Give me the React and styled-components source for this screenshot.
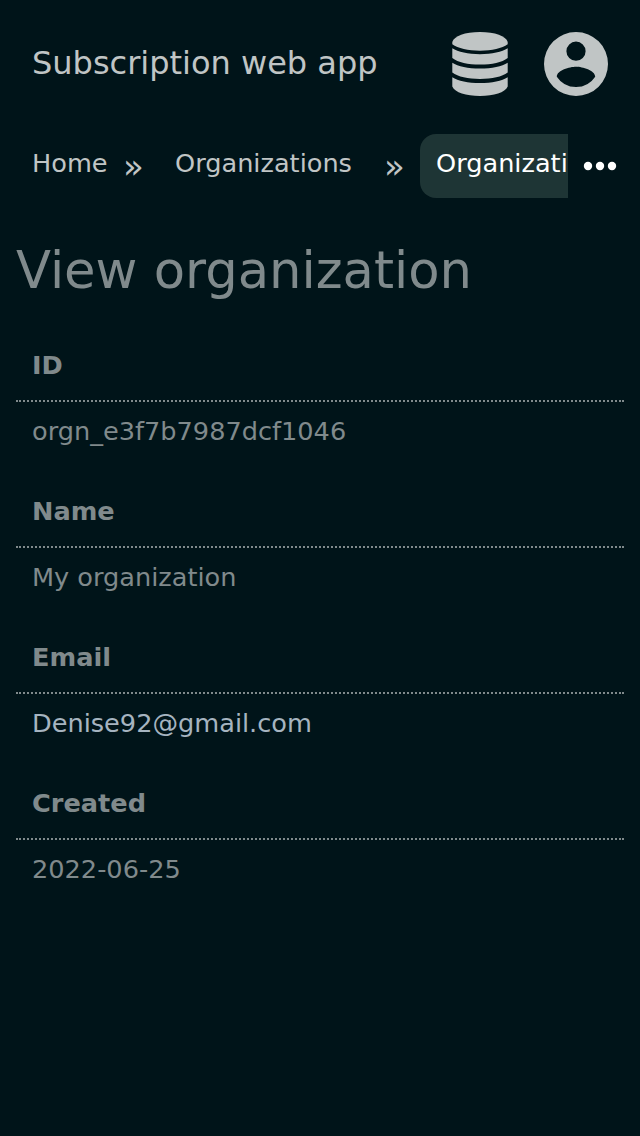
import React from "react";
import styled, { createGlobalStyle } from "styled-components";

const Global = createGlobalStyle`
  * { box-sizing: border-box; }
  body { margin: 0; background: #001419; color: #808a8c; font: 26px/32px "DejaVu Sans", sans-serif; }
  a { color: inherit; text-decoration: none; }
`;
const Page = styled.div`min-height: 1136px; overflow: hidden;`;
const Header = styled.header`
  display: flex; align-items: center; height: 128px; padding: 0 32px; color: #c0c5c5;
`;
const Brand = styled.a`flex: 1; padding-bottom: 2px; font-size: 32px; line-height: 40px;`;
const IconLink = styled.a`
  display: flex; width: 64px; height: 64px; margin-left: 32px;
  svg { width: 64px; height: 64px; fill: currentColor; }
`;
const Nav = styled.nav`display: flex; height: 70px; padding-top: 6px; color: #c0c5c5;`;
const Crumbs = styled.div`display: flex; width: 568px; overflow: hidden; white-space: nowrap;`;
const Crumb = styled.a`
  flex: none; height: 64px; width: ${(p) => p.$width}px; padding: 13px 16px;
  margin-left: ${(p) => p.$gap}px; line-height: 32px; font-size: 25.6px;
  border-radius: 16px; background: ${(p) => (p.$active ? "#1e3535" : "transparent")};
  color: ${(p) => (p.$active ? "#fff" : "inherit")};
`;
const Separator = styled.span`
  flex: none; width: 20px; margin-left: ${(p) => p.$gap}px; padding-top: 12px;
  font-size: 34px; line-height: 40px;
`;
const More = styled.button`
  width: 64px; height: 64px; padding: 0; border: 0; background: none; color: #fff;
  svg { display: block; width: 64px; height: 64px; fill: currentColor; }
`;
const Main = styled.main`padding: 40px 16px 0;`;
const Title = styled.h1`margin: 0; font-weight: 400; font-size: 51.2px; line-height: 64px;`;
const Details = styled.dl`margin: 34px 0 0; font-size: 25.6px;`;
const Term = styled.dt`
  height: 66px; padding: 13px 16px 0; font-weight: 700; border-bottom: 2px dotted #808a8c;
`;
const Value = styled.dd`
  height: 80px; margin: 0; padding: 13px 16px 0; color: ${(p) => (p.$link ? "#a6b4c0" : "inherit")};
`;

const rows = [
  ["ID", "orgn_e3f7b7987dcf1046"],
  ["Name", "My organization"],
  ["Email", "Denise92@gmail.com"],
  ["Created", "2022-06-25"],
];

export default function App() {
  return (
    <Page>
      <Global />
      <Header>
        <Brand href="#">Subscription web app</Brand>
        <IconLink href="#" aria-label="Data">
          <svg viewBox="0 0 64 64">
            <path d="M4.300 10C6 4 17 0 32 0s26 4 27.700 10v2.300C54 16.500 44 18.700 32 18.700S10 16.500 4.300 12.300z" />
            <path d="M4.300 16.300C10 20 20 22.200 32 22.200s22-2.200 27.700-5.900v9.700C54 30.500 44 32.600 32 32.600S10 30.500 4.300 26z" />
            <path d="M4.300 30.800C10 34.500 20 36.600 32 36.600s22-2.100 27.700-5.800v9.800C54 44.900 44 47 32 47S10 44.900 4.300 40.600z" />
            <path d="M4.300 45.200C10 48.900 20 51 32 51s22-2.100 27.700-5.800v9.300C57 60.500 46 64 32 64S7 60.500 4.300 54.500z" />
          </svg>
        </IconLink>
        <IconLink href="#" aria-label="Account">
          <svg viewBox="0 0 64 64">
            <path fillRule="evenodd" d="M32 0a32 32 0 1 0 0 64 32 32 0 0 0 0-64zm0 9.600a9.600 9.600 0 1 1 0 19.200 9.600 9.600 0 0 1 0-19.200zm0 45.400a23 23 0 0 1-19.200-10.300c.1-6.400 12.800-9.900 19.200-9.900s19.100 3.500 19.200 9.900A23 23 0 0 1 32 55z" />
          </svg>
        </IconLink>
      </Header>
      <Nav>
        <Crumbs>
          <Crumb href="#" $gap={16} $width={107}>Home</Crumb>
          <Separator $gap={0}>»</Separator>
          <Crumb href="#" $gap={16} $width={209}>Organizations</Crumb>
          <Separator $gap={16}>»</Separator>
          <Crumb href="#" $gap={16} $width={210} $active>Organization</Crumb>
        </Crumbs>
        <More aria-label="More">
          <svg viewBox="0 0 64 64"><circle cx="20" cy="32" r="4.200" /><circle cx="32" cy="32" r="4.200" /><circle cx="44" cy="32" r="4.200" /></svg>
        </More>
      </Nav>
      <Main>
        <Title>View organization</Title>
        <Details>
          {rows.map(([term, value]) => (
            <React.Fragment key={term}>
              <Term>{term}</Term>
              <Value $link={term === "Email"}>
                {term === "Email" ? <a href={`mailto:${value}`}>{value}</a> : value}
              </Value>
            </React.Fragment>
          ))}
        </Details>
      </Main>
    </Page>
  );
}
